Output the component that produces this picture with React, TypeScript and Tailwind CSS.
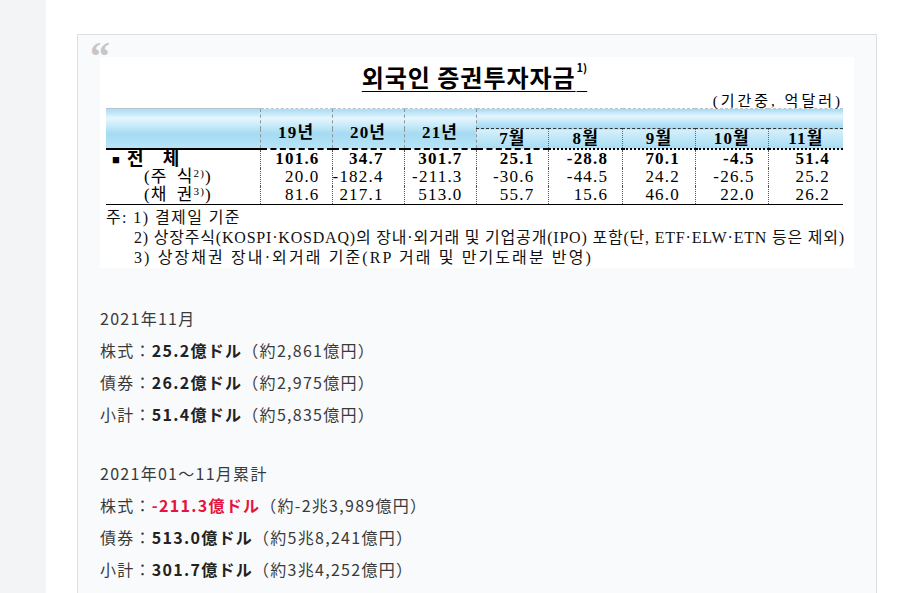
const serif = "font-['Liberation_Serif','Noto_Sans_CJK_KR',serif]";
const headGrad =
  'bg-[linear-gradient(to_bottom,#a8dcf5_0%,#e6f6fd_22%,#c6eaf9_42%,#a4dbf3_62%,#b9e4f7_100%)]';
const topGrad = 'bg-[linear-gradient(to_bottom,#a8dcf5_0%,#e6f6fd_35%,#b5e2f6_75%,#a0d9f2_100%)]';
const monthGrad = 'bg-[linear-gradient(to_bottom,#d6f0fb_0%,#bde6f7_50%,#aadcf3_100%)]';

const years = ['19년', '20년', '21년'];
const months = ['7월', '8월', '9월', '10월', '11월'];
const colWidths = [155, 72, 71, 72, 73, 74, 73, 73, 75];
const padRight = ['pr-[12px]', 'pr-[20px]', 'pr-[13px]', 'pr-[14px]', 'pr-[14px]', 'pr-[15px]', 'pr-[13px]', 'pr-[13px]'];

const rows = [
  { label: 'total', bold: true, values: ['101.6', '34.7', '301.7', '25.1', '-28.8', '70.1', '-4.5', '51.4'] },
  { label: 'stock', bold: false, values: ['20.0', '-182.4', '-211.3', '-30.6', '-44.5', '24.2', '-26.5', '25.2'] },
  { label: 'bond', bold: false, values: ['81.6', '217.1', '513.0', '55.7', '15.6', '46.0', '22.0', '26.2'] },
];

function RowLabel({ kind }: { kind: string }) {
  if (kind === 'total') {
    return (
      <div className="flex items-center pl-[6px] font-bold">
        <span className="text-[13px] leading-none">■</span>
        <span className="ml-[6px] text-[18px]">전</span>
        <span className="ml-[18px] text-[18px]">체</span>
      </div>
    );
  }
  return (
    <div className="pl-[38px]">
      ({kind === 'stock' ? '주' : '채'}
      <span className="ml-[9px]">{kind === 'stock' ? '식' : '권'}</span>
      <sup className="text-[11px]">{kind === 'stock' ? '2)' : '3)'}</sup>)
    </div>
  );
}

function StatsTable() {
  return (
    <div className={`h-[211px] bg-white pl-[6px] pr-[11px] pt-[6px] text-black ${serif}`}>
      <div className="text-center text-[24px] leading-[28px] font-bold tracking-[0.04em] font-['Noto_Sans_CJK_KR',sans-serif]">
        <span className="underline decoration-1 underline-offset-[4px]">
          외국인 증권투자자금<sup className="ml-[1px] text-[11px] align-[10px] tracking-normal">1)</sup>
        </span>
      </div>
      <div className="h-[17px] text-right text-[15px] leading-[20px] tracking-[0.2em]">(기간중, 억달러)</div>
      <table className="table-fixed border-collapse text-[17px] tracking-[0.07em]">
        <colgroup>
          {colWidths.map((w, i) => (
            <col key={i} style={{ width: w }} />
          ))}
        </colgroup>
        <thead>
          <tr className="h-[20px]">
            <th rowSpan={2} className={`${headGrad} border-t border-t-[#b9c4c8] border-b-2 border-b-black p-0`} />
            {years.map((y) => (
              <th
                key={y}
                rowSpan={2}
                className={`${headGrad} border-t border-t-[#b9c4c8] border-b-2 border-b-black border-l border-l-[#8a9499] border-dashed p-0 pt-[8px] text-center font-bold leading-[22px]`}
              >
                {y}
              </th>
            ))}
            <th colSpan={5} className={`${topGrad} border-t border-t-[#b9c4c8] border-l border-l-[#8a9499] border-dashed border-b border-b-[#333] p-0`} />
          </tr>
          <tr className="h-[19px]">
            {months.map((m, i) => (
              <th
                key={m}
                className={`${monthGrad} border-b-2 border-b-black p-0 text-center font-bold leading-[19px] ${i > 0 ? 'border-l border-l-[#666] border-dotted' : 'border-l border-l-[#8a9499] border-dashed'}`}
              >
                {m}
              </th>
            ))}
          </tr>
        </thead>
        <tbody className="border-b border-b-black">
          {rows.map((r) => (
            <tr key={r.label} className={`h-[18px] leading-[18px] ${r.bold ? 'font-bold' : ''}`}>
              <td className="p-0">
                <RowLabel kind={r.label} />
              </td>
              {r.values.map((v, i) => (
                <td key={i} className={`border-l border-dotted border-l-[#555] p-0 text-right ${padRight[i]}`}>
                  {v}
                </td>
              ))}
            </tr>
          ))}
        </tbody>
      </table>
      <div className="mt-[3px] whitespace-nowrap text-[16px] leading-[20px] text-[#111]">
        <div className="tracking-[1.4px]">주: 1) 결제일 기준</div>
        <div className="pl-[28px] tracking-[0.8px]">
          2) 상장주식(KOSPI·KOSDAQ)의 장내·외거래 및 기업공개(IPO) 포함(단, ETF·ELW·ETN 등은 제외)
        </div>
        <div className="pl-[28px] tracking-[2.1px]">3) 상장채권 장내·외거래 기준(RP 거래 및 만기도래분 반영)</div>
      </div>
    </div>
  );
}

function Amount({ label, value, note, red }: { label: string; value: string; note: string; red?: boolean }) {
  return (
    <div>
      {label}：<b className={red ? 'text-[#e5133f]' : 'text-[#222]'}>{value}</b>（{note}）
    </div>
  );
}

export default function App() {
  return (
    <div className="flex min-h-screen overflow-hidden bg-white">
      <aside className="w-[46px] shrink-0 bg-[#f3f4f6]" />
      <main className="min-w-0 flex-1 pl-[31px] pr-[29px] pt-[34px]">
        <blockquote className="relative border border-[#dedede] bg-[#f9fafc] px-[22px] pb-10 pt-[22px]">
          <span className="absolute left-[12px] top-[2px] text-[40px] font-bold leading-none text-[#c6c6c6] font-['Liberation_Serif',serif]">
            “
          </span>
          <StatsTable />
          <div className="mt-[34px] text-[16px] leading-[32px] tracking-[0.08em] text-[#3a3a3a] font-['Noto_Sans_CJK_JP',sans-serif]">
            <div className="mb-[27px]">
              <div>2021年11月</div>
              <Amount label="株式" value="25.2億ドル" note="約2,861億円" />
              <Amount label="債券" value="26.2億ドル" note="約2,975億円" />
              <Amount label="小計" value="51.4億ドル" note="約5,835億円" />
            </div>
            <div>
              <div>2021年01～11月累計</div>
              <Amount label="株式" value="-211.3億ドル" note="約-2兆3,989億円" red />
              <Amount label="債券" value="513.0億ドル" note="約5兆8,241億円" />
              <Amount label="小計" value="301.7億ドル" note="約3兆4,252億円" />
            </div>
          </div>
        </blockquote>
      </main>
    </div>
  );
}
